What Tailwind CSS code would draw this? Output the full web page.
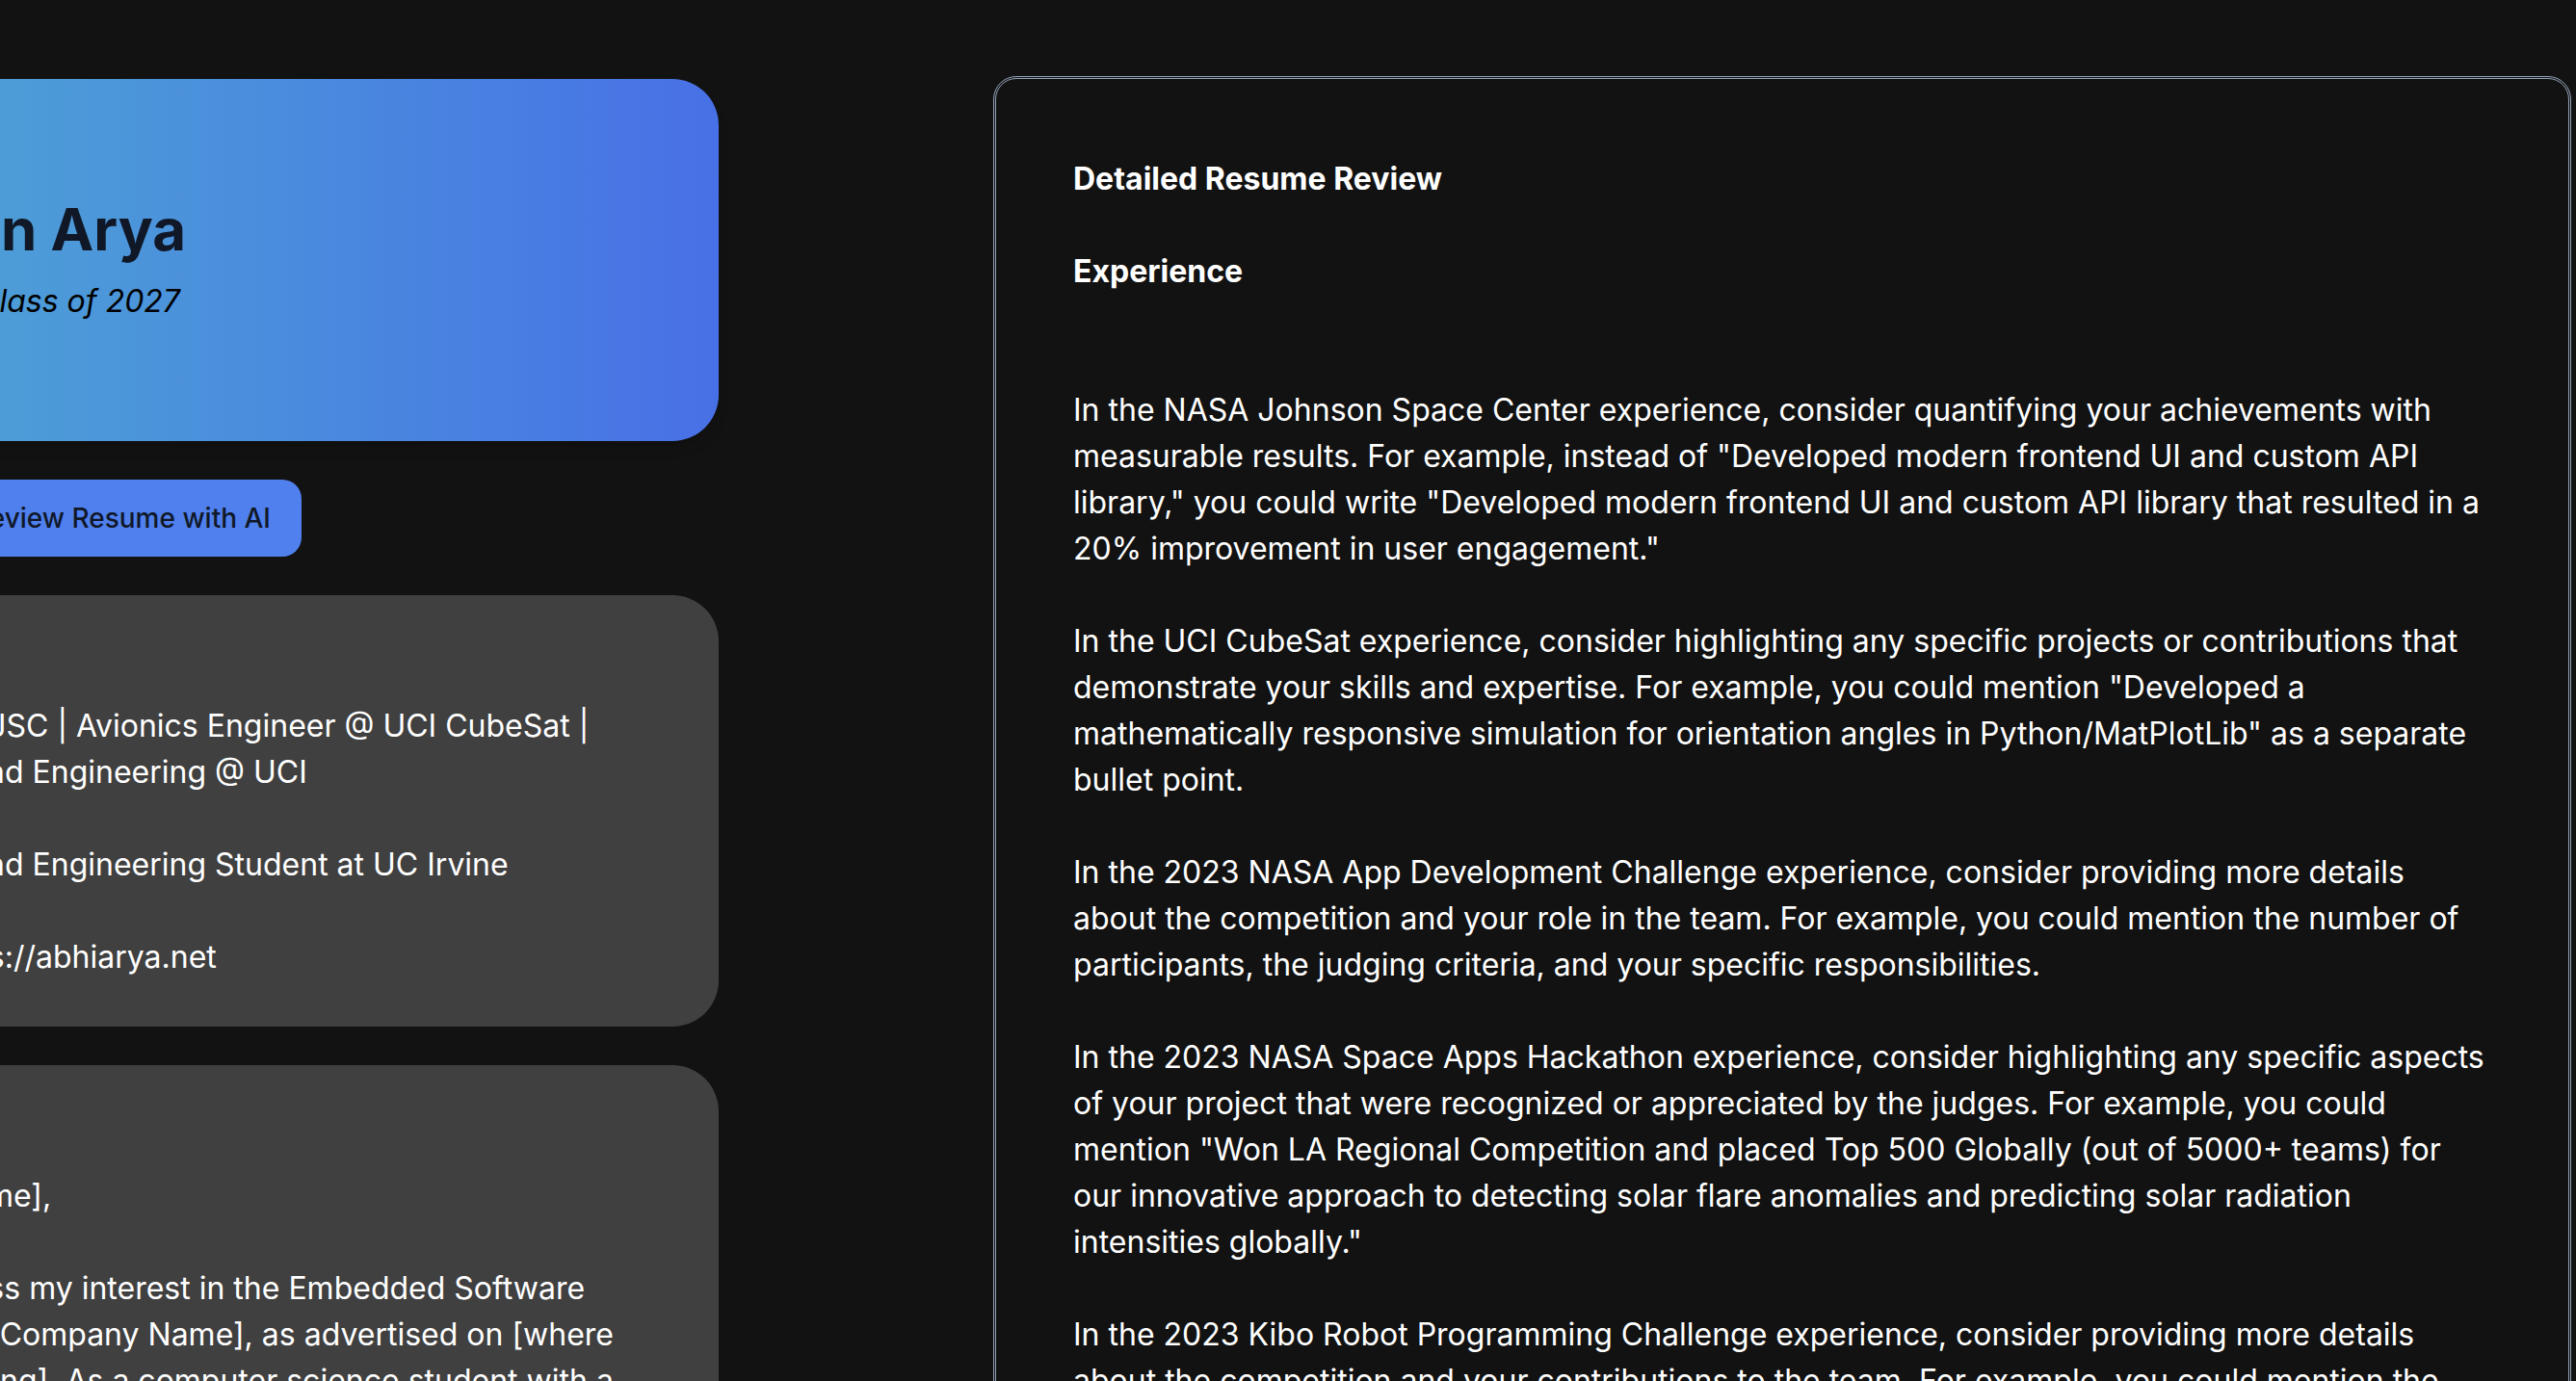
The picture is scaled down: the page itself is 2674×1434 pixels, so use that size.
<!DOCTYPE html>
<html lang="en">
<head>
<meta charset="utf-8">
<meta name="viewport" content="width=device-width, initial-scale=1">
<title>Resume Review</title>
<script src="https://cdn.jsdelivr.net/npm/@tailwindcss/browser@4"></script>
</head>
<body class="h-screen overflow-hidden bg-[#121212] font-['Inter',sans-serif] text-[32px] leading-[48px] text-white">
<main class="flex items-start">
  <div class="-ml-[401px] mt-[82px] flex w-[1147px] shrink-0 flex-col gap-10">
    <header class="flex h-[376px] rounded-[48px] bg-linear-to-r from-[#53b2cd] to-[#4870e6] pt-[125px] shadow-lg">
      <div class="flex w-[594px] justify-end">
        <div class="flex flex-col items-end gap-5 whitespace-nowrap">
          <h1 class="text-[60px] leading-[62px] font-bold text-gray-900">Abhiman Arya</h1>
          <p class="pr-1.5 text-black italic">UC Irvine | Class of 2027</p>
        </div>
      </div>
    </header>
    <div class="flex justify-end pr-[433px]">
      <button type="button" class="h-20 rounded-[20px] bg-[#4f80ee] px-8 text-[28px] leading-10 font-medium whitespace-nowrap text-gray-900">Review Resume with AI</button>
    </div>
    <section class="flex flex-col gap-12 rounded-[48px] bg-[#404040] px-20 pt-28 pb-12">
      <p>Past Intern @ NASA JSC | Avionics Engineer @ UCI CubeSat |<br>Computer Science and Engineering @ UCI</p>
      <p>Computer Science and Engineering Student at UC Irvine</p>
      <p>Online Portfolio: https://abhiarya.net</p>
    </section>
    <section class="flex flex-col gap-12 rounded-[48px] bg-[#404040] px-20 pt-28 pb-12">
      <p>Dear [Recruiter's Name],</p>
      <p>I am writing to express my interest in the Embedded Software<br>Engineer position at [Company Name], as advertised on [where<br>you saw the job posting]. As a computer science student with a</p>
    </section>
  </div>

  <!-- Review panel -->
  <article class="mt-[79px] mr-[5px] ml-[285px] flex min-w-0 flex-1 flex-col gap-12 rounded-3xl border-3 border-double border-[#94a3b8] p-20">
    <h2 class="font-bold">Detailed Resume Review</h2>
    <h3 class="mb-12 font-bold">Experience</h3>
    <p>In the NASA Johnson Space Center experience, consider quantifying your achievements with measurable results. For example, instead of "Developed modern frontend UI and custom API library," you could write "Developed modern frontend UI and custom API library that resulted in a 20% improvement in user engagement."</p>
    <p>In the UCI CubeSat experience, consider highlighting any specific projects or contributions that demonstrate your skills and expertise. For example, you could mention "Developed a mathematically responsive simulation for orientation angles in Python/MatPlotLib" as a separate bullet point.</p>
    <p>In the 2023 NASA App Development Challenge experience, consider providing more details about the competition and your role in the team. For example, you could mention the number of participants, the judging criteria, and your specific responsibilities.</p>
    <p>In the 2023 NASA Space Apps Hackathon experience, consider highlighting any specific aspects of your project that were recognized or appreciated by the judges. For example, you could mention "Won LA Regional Competition and placed Top 500 Globally (out of 5000+ teams) for our innovative approach to detecting solar flare anomalies and predicting solar radiation intensities globally."</p>
    <p>In the 2023 Kibo Robot Programming Challenge experience, consider providing more details about the competition and your contributions to the team. For example, you could mention the</p>
  </article>
</main>
</body>
</html>
